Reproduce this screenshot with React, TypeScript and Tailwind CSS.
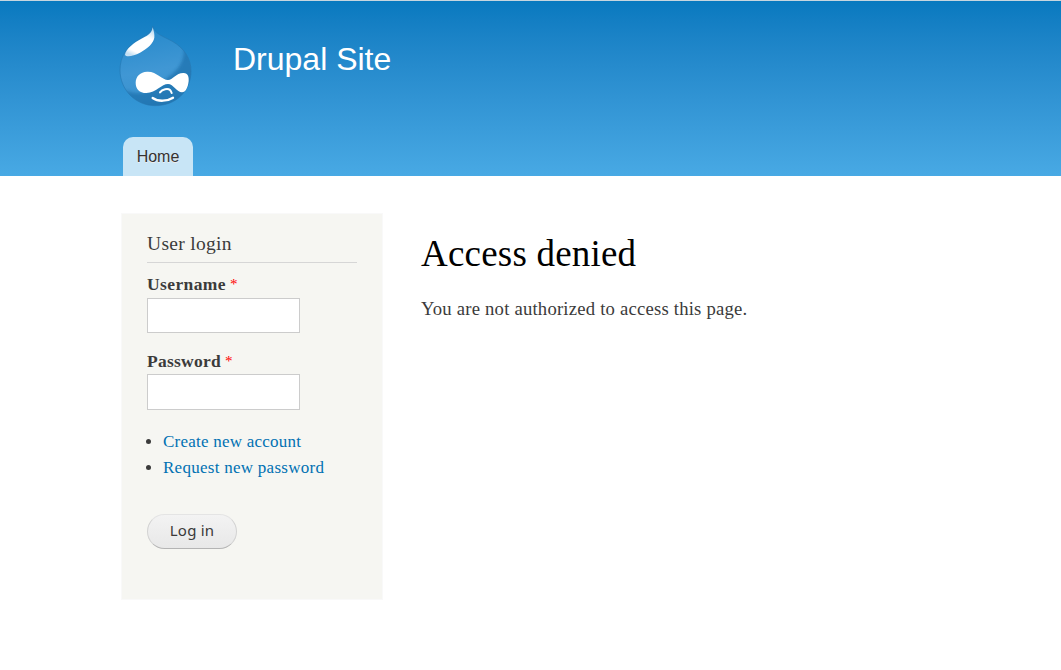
import React from 'react';

const drop = 'M128 33C134 57 158 63 187 79C222 99 243 130 243 168C243 230 196 272 136 272C76 272 30 224 30 165C30 125 51 93 84 75C108 61 126 53 128 33Z';

function Logo() {
  return (
    <svg viewBox="0 0 285 300" className="block h-[100px] w-[95px]" role="img" aria-label="Home">
      <defs>
        <linearGradient id="drop" x1="0.4" y1="0.1" x2="0.55" y2="1">
          <stop offset="0" stopColor="#2488ca" />
          <stop offset="0.5" stopColor="#4097d4" />
          <stop offset="0.8" stopColor="#3b92ce" />
          <stop offset="1" stopColor="#2b82be" />
        </linearGradient>
        <linearGradient id="shine" x1="0.8" y1="0" x2="0.3" y2="1">
          <stop offset="0" stopColor="#b9daf1" />
          <stop offset="0.3" stopColor="#ffffff" />
          <stop offset="0.85" stopColor="#ffffff" />
          <stop offset="1" stopColor="#c5e0f3" />
        </linearGradient>
        <filter id="soft" x="-20%" y="-20%" width="140%" height="140%"><feGaussianBlur stdDeviation="4" /></filter>
        <clipPath id="outline"><path d={drop} /></clipPath>
      </defs>
      <g clipPath="url(#outline)">
        <path d="M0 0H285V300H0Z" fill="url(#drop)" />
        <path d="M222 98C224 138 204 165 178 184L150 208C112 240 80 240 46 226C60 280 120 300 190 280C260 250 275 160 222 98Z" fill="#176aa6" opacity="0.6" filter="url(#soft)" />
      </g>
      <path d={drop} fill="none" stroke="#2576b0" strokeWidth="3" opacity="0.6" />
      <path d="M128 37C126 53 117 60 97 70C72 83 48 102 45 119C48 127 70 124 90 113C114 100 130 84 133 68C134 58 132 50 128 37Z" fill="url(#shine)" />
      <path d="M111 170C139 168 157 195 174 195C188 195 199 173 221 174C234 175 237 185 236 198C234 217 227 232 216 232C201 232 190 207 174 207C155 207 139 233 109 234C88 234 77 222 77 203C77 184 91 171 111 170Z" fill="#fff" />
      <path d="M150 232C157 222 174 219 180 225Q183 228 185 234" fill="none" stroke="#fff" strokeWidth="6" strokeLinecap="round" />
      <path d="M128 249C145 261 172 259 189 248" fill="none" stroke="#fff" strokeWidth="7" strokeLinecap="round" />
    </svg>
  );
}

function Field({ label, tracking, type, className, inputClass }: { label: string; tracking: string; type: string; className: string; inputClass: string }) {
  return (
    <div className={className}>
      <label className="flex h-5 items-start gap-[4px] text-[17.5px] leading-5 font-bold">
        <span className={tracking}>{label}</span>
        <span className="font-['Liberation_Serif',serif] text-[15px] font-normal text-[#ff0000]">*</span>
      </label>
      <input type={type} className={`block w-[153px] border border-[#ccc] bg-white px-1 outline-none ${inputClass}`} />
    </div>
  );
}

export default function App() {
  return (
    <div className="h-[670px] overflow-hidden bg-white font-['Liberation_Serif',serif] text-[#3b3b3b]">
      <header className="flex h-[176px] flex-col justify-between border-t border-[#c5d5df] bg-linear-to-b from-[#0779bf] to-[#48a9e4]">
        <div className="flex pt-[14px] pl-[110px]">
          <Logo />
          <div className="pt-[24px] pl-[28px] font-['Liberation_Sans',sans-serif] text-[32px] leading-10 text-white">Drupal Site</div>
        </div>
        <nav className="flex pl-[123px]">
          <a className="flex h-[39px] w-[70px] items-center justify-center rounded-t-[10px] bg-[#c8e5f6] font-['Liberation_Sans',sans-serif] text-[16px] text-[#333] [text-shadow:0_1px_0_#eee]">Home</a>
        </nav>
      </header>
      <div className="flex items-start pt-[37px] pl-[121px]">
        <aside className="h-[387px] w-[262px] border border-[#f9f9f9] bg-[#f6f6f2] px-[25px]">
          <h2 className="mt-[18px] h-[31px] border-b border-[#d6d6d6] text-[19.5px] leading-6 tracking-[0.3px]">User login</h2>
          <Field label="Username" tracking="tracking-[0.4px]" type="text" className="mt-[11px]" inputClass="mt-[4px] h-[35px]" />
          <Field label="Password" tracking="tracking-[0.25px]" type="password" className="mt-[18px]" inputClass="mt-[3px] h-[36px]" />
          <ul className="mt-[19px] list-disc pl-[16px] text-[17px] leading-[26px]">
            <li><a className="tracking-[0.23px] text-[#0071b3]">Create new account</a></li>
            <li><a className="tracking-[0.27px] text-[#0071b3]">Request new password</a></li>
          </ul>
          <button className="mt-[33px] flex h-[35px] w-[90px] items-center justify-center rounded-full border border-[#e4e4e4] border-x-[#d2d2d2] border-b-[#b4b4b4] bg-linear-to-b from-[#f3f3f3] to-[#e8e8e8] pb-[2px] font-['Noto_Sans',sans-serif] text-[15px] tracking-[0.2px] text-[#3a3a3a]">Log in</button>
        </aside>
        <main className="pl-[38px]">
          <h1 className="mt-[19px] text-[37px] leading-[44px] tracking-[0.2px] text-black">Access denied</h1>
          <p className="mt-[21px] text-[18.7px] leading-6 tracking-[0.2px]">You are not authorized to access this page.</p>
        </main>
      </div>
    </div>
  );
}
